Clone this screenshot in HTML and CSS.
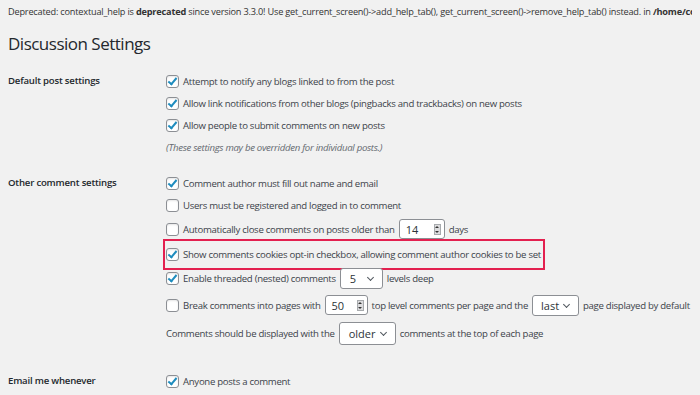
FILE: index.html
```html
<!DOCTYPE html>
<html>
<head>
<meta charset="utf-8">
<link rel="stylesheet" href="styles.css">
</head>
<body>
<div class="page">
  <p class="notice">Deprecated: contextual_help is <b>deprecated</b> since version 3.3.0! Use get_current_screen()-&gt;add_help_tab(), get_current_screen()-&gt;remove_help_tab() instead. in <b>/home/content/sites/wp-includes/functions.php</b></p>
  <h1 class="title">Discussion Settings</h1>

  <div class="section s1">
    <div class="label">Default post settings</div>
    <div class="fields">
      <div class="opt"><span class="cb on"></span>Attempt to notify any blogs linked to from the post</div>
      <div class="opt"><span class="cb on"></span>Allow link notifications from other blogs (pingbacks and trackbacks) on new posts</div>
      <div class="opt"><span class="cb on"></span>Allow people to submit comments on new posts</div>
      <div class="opt note">(These settings may be overridden for individual posts.)</div>
    </div>
  </div>

  <div class="section s2">
    <div class="label">Other comment settings</div>
    <div class="fields">
      <div class="opt"><span class="cb on"></span>Comment author must fill out name and email</div>
      <div class="opt"><span class="cb"></span>Users must be registered and logged in to comment</div>
      <div class="opt tall"><span class="cb"></span>Automatically close comments on posts older than <span class="num w14">14<span class="spin"></span></span> days</div>
      <div class="opt hl"><span class="cb on"></span>Show comments cookies opt-in checkbox, allowing comment author cookies to be set</div>
      <div class="opt sel-row"><span class="cb on"></span>Enable threaded (nested) comments <span class="sel w5">5</span> levels deep</div>
      <div class="opt taller"><span class="cb"></span>Break comments into pages with <span class="num w50">50<span class="spin"></span></span> top level comments per page and the <span class="sel wlast">last</span> page displayed by default</div>
      <div class="opt older">Comments should be displayed with the <span class="sel wolder">older</span> comments at the top of each page</div>
    </div>
  </div>

  <div class="section s3">
    <div class="label">Email me whenever</div>
    <div class="fields">
      <div class="opt"><span class="cb on"></span>Anyone posts a comment</div>
    </div>
  </div>
</div>
</body>
</html>
```
FILE: styles.css
```css
html, body {
  margin: 0;
  padding: 0;
  background: #f1f1f1;
}
body {
  font-family: "Open Sans", "Noto Sans", sans-serif;
  font-size: 9.6px;
  letter-spacing: -0.29px;
  color: #3c434a;
  width: 700px;
  height: 395px;
  overflow: hidden;
}
.page {
  padding: 0 8px;
}
.notice {
  margin: 0;
  padding-top: 5px;
  height: 15px;
  line-height: 14px;
  font-size: 9.2px;
  letter-spacing: -0.2px;
  color: #333;
  white-space: nowrap;
  overflow: hidden;
}
.notice b {
  font-weight: 700;
}
.title {
  margin: 12px 0 0;
  font-size: 17px;
  letter-spacing: -0.5px;
  font-weight: 400;
  line-height: 24px;
  color: #23282d;
}
.section {
  display: flex;
}
.s1 { margin-top: 14px; }
.s2 { margin-top: 14px; }
.s3 { margin-top: 24px; }
.label {
  width: 158px;
  flex: none;
  height: 22px;
  line-height: 22px;
  font-weight: 600;
  letter-spacing: -0.2px;
  color: #23282d;
}
.fields {
  display: flex;
  flex-direction: column;
  align-items: flex-start;
}
.opt {
  display: flex;
  align-items: center;
  height: 22px;
  white-space: nowrap;
}
.opt.tall { height: 26px; }
.opt.hl {
  height: 25px;
  outline: 2px solid #e3204f;
  outline-offset: 1px;
  padding: 0 1px 0 0;
}
.opt.sel-row { height: 23px; }
.opt.taller { height: 30px; }
.opt.older { height: 26px; }
.note {
  font-style: italic;
  color: #646970;
}
.cb {
  width: 11px;
  height: 11px;
  border: 1px solid #8c8f94;
  border-radius: 3px;
  background: #fff;
  box-shadow: inset 0 1px 2px rgba(0,0,0,0.1);
  margin-right: 4px;
  flex: none;
  position: relative;
}
.cb.on::after {
  content: "";
  position: absolute;
  left: 3px;
  top: 0px;
  width: 3px;
  height: 7px;
  border: solid #1e8cbe;
  border-width: 0 2px 2px 0;
  transform: rotate(40deg);
}
.num, .sel {
  display: inline-flex;
  align-items: center;
  box-sizing: border-box;
  background: #fff;
  border: 1px solid #8c8f94;
  border-radius: 3px;
  color: #2c3338;
  font-size: 11px;
  letter-spacing: 0;
  margin: 0 4px;
  position: relative;
}
.num {
  height: 20px;
  padding-left: 6px;
}
.w14 { width: 46px; }
.w50 { width: 43px; }
.spin {
  position: absolute;
  right: 3px;
  top: 4px;
  width: 7px;
  height: 11px;
  background: #dcdcde;
  border: 1px solid #a7aaad;
  box-sizing: border-box;
}
.spin::before, .spin::after {
  content: "";
  position: absolute;
  left: 0.5px;
  border-left: 2px solid transparent;
  border-right: 2px solid transparent;
}
.spin::before { top: 1px; border-bottom: 2px solid #333; }
.spin::after { bottom: 1px; border-top: 2px solid #333; }
.sel {
  height: 21px;
  padding-left: 9px;
}
.sel::after {
  content: "";
  position: absolute;
  right: 9px;
  top: 6px;
  width: 4px;
  height: 4px;
  border: solid #50575e;
  border-width: 0 1.5px 1.5px 0;
  transform: rotate(45deg);
}
.w5 { width: 43px; }
.wlast { width: 47px; padding-left: 8px; }
.wolder { width: 57px; height: 23px; padding-left: 9px; }
.wolder::after { top: 7px; }
```
